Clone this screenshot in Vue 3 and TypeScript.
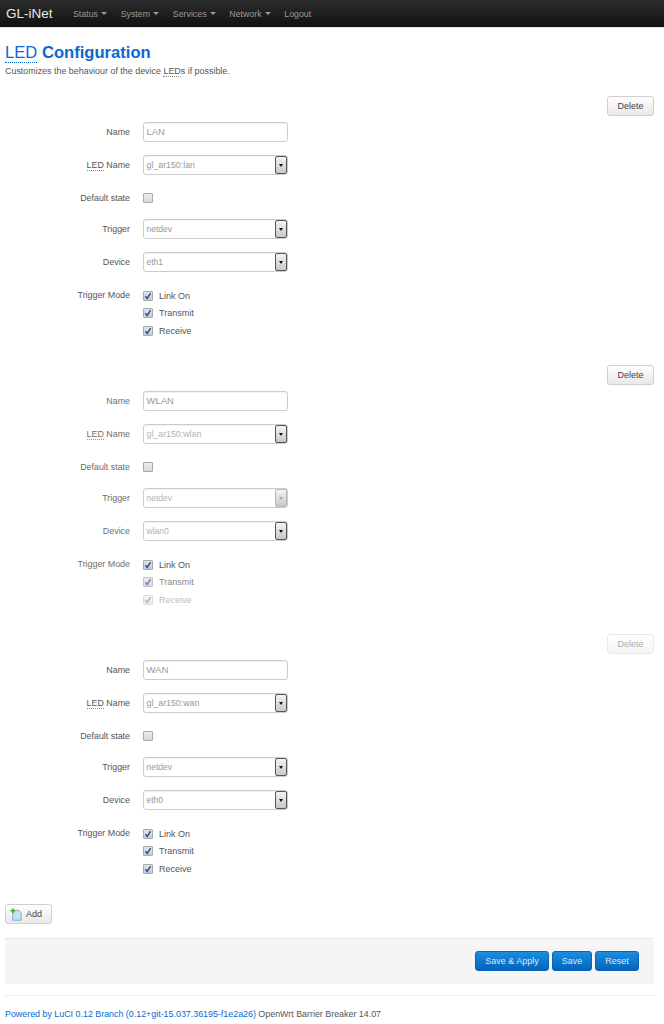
<script setup lang="ts">
interface Mode { label: string; fade?: string }
interface Led {
  name: string; led: string; trigger: string; device: string
  deleteOff?: boolean; soft?: boolean; triggerFaded?: boolean; modes: Mode[]
}
const modes = (): Mode[] => [{ label: 'Link On' }, { label: 'Transmit' }, { label: 'Receive' }]
const leds: Led[] = [
  { name: 'LAN', led: 'gl_ar150:lan', trigger: 'netdev', device: 'eth1', modes: modes() },
  {
    name: 'WLAN', led: 'gl_ar150:wlan', trigger: 'netdev', device: 'wlan0', soft: true, triggerFaded: true,
    modes: [{ label: 'Link On' }, { label: 'Transmit', fade: 'mid' }, { label: 'Receive', fade: 'low' }]
  },
  { name: 'WAN', led: 'gl_ar150:wan', trigger: 'netdev', device: 'eth0', deleteOff: true, modes: modes() }
]
const nav = ['Status', 'System', 'Services', 'Network']
</script>

<template>
  <div class="page">
    <header class="navbar">
      <span class="brand">GL-iNet</span>
      <nav class="menu">
        <span v-for="n in nav" :key="n" class="menu-item">{{ n }}<i class="caret"></i></span>
        <span class="menu-item">Logout</span>
      </nav>
    </header>

    <main class="content">
      <h2 class="title"><abbr class="abbr">LED</abbr> Configuration</h2>
      <p class="desc">Customizes the behaviour of the device <abbr class="abbr-small">LED</abbr>s if possible.</p>

      <section v-for="l in leds" :key="l.name" class="led" :class="{ soft: l.soft }">
        <div class="del-row">
          <button class="btn" :class="{ off: l.deleteOff }" type="button">Delete</button>
        </div>

        <div class="row">
          <label class="lbl">Name</label>
          <div class="field input">{{ l.name }}</div>
        </div>
        <div class="row">
          <label class="lbl"><abbr class="abbr-small">LED</abbr> Name</label>
          <div class="field select">
            <span class="val">{{ l.led }}</span>
            <span class="arrow"><i></i></span>
          </div>
        </div>
        <div class="row check-row">
          <label class="lbl">Default state</label>
          <span class="check"></span>
        </div>
        <div class="row">
          <label class="lbl">Trigger</label>
          <div class="field select small">
            <span class="val">{{ l.trigger }}</span>
            <span class="arrow" :class="{ faded: l.triggerFaded }"><i></i></span>
          </div>
        </div>
        <div class="row">
          <label class="lbl">Device</label>
          <div class="field select small">
            <span class="val">{{ l.device }}</span>
            <span class="arrow"><i></i></span>
          </div>
        </div>
        <div class="row mode-row">
          <label class="lbl">Trigger Mode</label>
          <div class="modes">
            <div v-for="m in l.modes" :key="m.label" class="mode" :class="m.fade">
              <span class="check on">
                <svg viewBox="0 0 10 10" width="10" height="10"><path d="M2.4 5.2 4.2 7.4 7.6 2.2" fill="none" stroke="#2f4f8f" stroke-width="1.5" /></svg>
              </span>
              <span class="mode-text">{{ m.label }}</span>
            </div>
          </div>
        </div>
      </section>

      <button class="btn add" type="button">
        <svg viewBox="0 0 14 14" width="13" height="13">
          <path d="M3 2.5h6.5l2.5 2.5v8.2H3z" fill="#c6e2f5" stroke="#7fa9c8" stroke-width="1" />
          <path d="M3 .5v5M.5 3h5" stroke="#4da82e" stroke-width="1.8" />
        </svg>
        <span>Add</span>
      </button>

      <div class="actions">
        <button class="btn primary apply" type="button">Save &amp; Apply</button>
        <button class="btn primary save" type="button">Save</button>
        <button class="btn primary reset" type="button">Reset</button>
      </div>

      <footer class="footer">
        <a class="link">Powered by LuCI 0.12 Branch (0.12+git-15.037.36195-f1e2a26)</a> OpenWrt Barrier Breaker 14.07
      </footer>
    </main>
  </div>
</template>

<style>
html, body { margin: 0; background: #fff; }
</style>

<style scoped>
.page {
  width: 664px;
  height: 1024px;
  overflow: hidden;
  font-family: "Liberation Sans", Arial, sans-serif;
  font-size: 9px;
  color: #555;
}
.navbar {
  height: 27px;
  border-bottom: 1px solid #e4e4e4;
  background: linear-gradient(#2d2d2d, #101010);
  display: flex;
  align-items: center;
  padding-left: 6px;
}
.brand { font-size: 13.5px; color: #e8e8e8; width: 67px; }
.menu { display: flex; gap: 13.75px; font-size: 8.8px; color: #9a9a9a; }
.menu-item { display: flex; align-items: center; }
.caret {
  display: inline-block;
  margin-left: 3px;
  border-left: 3px solid transparent;
  border-right: 3px solid transparent;
  border-top: 3px solid #9a9a9a;
}
.content { padding: 0 10px 0 5px; }
.title { margin: 15px 0 0; height: 20px; line-height: 20px; font-size: 16.6px; font-weight: bold; color: #0a68cf; }
.abbr { font-weight: normal; border-bottom: 1px dotted #0a68cf; text-decoration: none; }
.abbr-small { border-bottom: 1px dotted #888; text-decoration: none; }
.desc { margin: 2px 0 0; line-height: 12px; font-size: 8.92px; color: #555; }
.led { height: 269px; box-sizing: border-box; }
.led:first-of-type { margin-top: 19px; }
.del-row { display: flex; justify-content: flex-end; height: 26px; }
.btn {
  box-sizing: border-box;
  height: 20px;
  border: 1px solid #d0d0d0;
  border-radius: 3px;
  background: linear-gradient(#fff, #e8e8e8);
  font: 9px "Liberation Sans", Arial, sans-serif;
  color: #444;
  padding: 0;
}
.del-row .btn { width: 47px; }
.btn.off { opacity: 0.45; }
.row { display: flex; height: 33px; align-items: flex-start; }
.lbl {
  width: 125px;
  margin-right: 13px;
  text-align: right;
  line-height: 20px;
  font-size: 8.9px;
  color: #555;
}
.field {
  box-sizing: border-box;
  width: 145px;
  height: 20px;
  border: 1px solid #ccc;
  border-radius: 3px;
  background: #fff;
  color: #999;
  line-height: 18px;
  padding-left: 2.5px;
  box-shadow: inset 0 1px 1px rgba(0, 0, 0, 0.06);
}
.input { font-size: 9.5px; }
.select { display: flex; justify-content: space-between; font-size: 8.8px; }
.select.small { font-size: 8.5px; }
.val { white-space: nowrap; }
.arrow {
  box-sizing: border-box;
  width: 12px;
  height: 18px;
  border: 1px solid #555;
  border-radius: 2px;
  background: linear-gradient(#f4f4f4, #c8c8c8);
  display: flex;
  align-items: center;
  justify-content: center;
}
.arrow i {
  border-left: 2.5px solid transparent;
  border-right: 2.5px solid transparent;
  border-top: 3px solid #111;
}
.arrow.faded { border-color: #bbb; }
.arrow.faded i { border-top-color: #aaa; }
.check {
  box-sizing: border-box;
  width: 10px;
  height: 10px;
  border: 1px solid #aaa;
  border-radius: 1px;
  background: linear-gradient(#ececec, #d8d8d8);
  display: block;
  position: relative;
}
.check svg { position: absolute; left: -1px; top: -1px; }
.check.on { background: linear-gradient(#e0e4ea, #c8ccd4); }
.check-row { height: 31px; align-items: flex-start; }
.check-row .check { margin-top: 5px; }
.mode-row { height: auto; }
.modes { padding-top: 1.75px; }
.mode { display: flex; align-items: center; height: 17.5px; }
.mode .check { flex: none; }
.mode-text { margin-left: 6px; font-size: 9px; color: #555; }
.mode.mid { opacity: 0.7; }
.mode.low { opacity: 0.4; }
.soft .val { opacity: 0.75; }
.soft .lbl { opacity: 0.85; }
.add {
  display: flex;
  align-items: center;
  gap: 3px;
  width: 47px;
  padding-left: 4px;
  margin-top: 1px;
}
.actions {
  margin-top: 14px;
  box-sizing: border-box;
  width: 649px;
  height: 46px;
  border-top: 1px solid #e6e6e6;
  background: #f5f5f5;
  display: flex;
  justify-content: flex-end;
  gap: 3px;
  padding: 12px 15px 0 0;
}
.primary {
  border-color: #0a63b8;
  background: linear-gradient(#1a8ee0, #0463bb);
  color: #d6e8f7;
}
.apply { width: 74px; }
.save { width: 40px; }
.reset { width: 44px; }
.footer {
  margin-top: 11px;
  border-top: 1px solid #eee;
  width: 649px;
  padding-top: 13px;
  font-size: 8.89px;
  color: #555;
  white-space: nowrap;
}
.link { color: #0a68cf; }
</style>
